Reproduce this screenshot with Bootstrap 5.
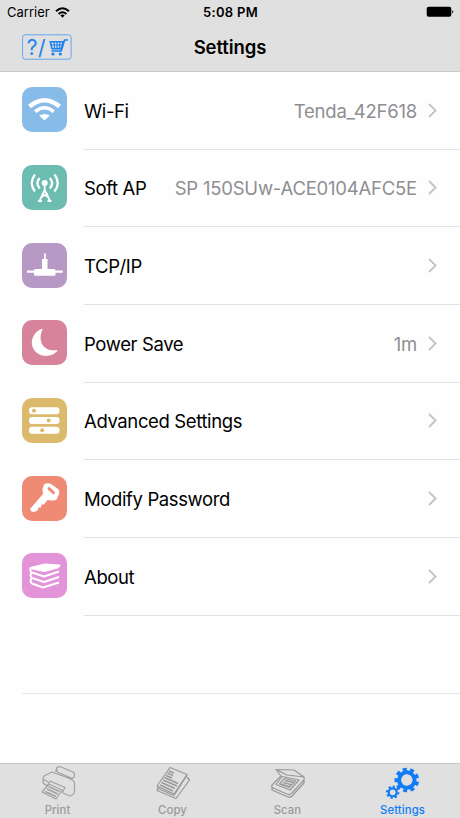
<!DOCTYPE html>
<html lang="en">
<head>
<meta charset="utf-8">
<meta name="viewport" content="width=device-width, initial-scale=1">
<title>Settings</title>
<link href="https://cdn.jsdelivr.net/npm/bootstrap@5.3.0/dist/css/bootstrap.min.css" rel="stylesheet">
<style>
body{font-family:Inter,"Liberation Sans",sans-serif;color:#000;background:#fefefe;height:818px;overflow:hidden}
svg{display:block;flex:none}
.top-area{background:#e0e0e0;height:72px;border-bottom:1px solid #c9c9c9}
.status{height:24px;font-size:13px;line-height:24px;padding:0 6px 0 7px}
.clock{letter-spacing:.3px}
.title-row{height:47px;padding:0 22px}
.help-btn{width:50px;height:26px;margin-top:-1px}
.page-title{font-size:18.5px;font-weight:600;line-height:24px;letter-spacing:-.08px;padding-bottom:2px}
.setting{height:77.7px;padding-left:22px}
.setting .tile{width:45px;height:45px;border-radius:10px;margin-top:-2px}
.setting .body-line{margin-left:17px;padding-right:23px;padding-top:2.4px;border-bottom:1px solid #e3e3e5;font-size:18.5px;letter-spacing:-.38px}
.value{color:#8e8e93;margin-right:11px;letter-spacing:-.22px}
.chev{margin-top:-3px}
.blank{height:77.7px;margin-left:22px;border-bottom:1px solid #e6e6e8}
.tabs{height:55px;background:#e0e0e0;border-top:1px solid #c6c6c6;color:#9a9a9a;font-size:11.3px;line-height:14px;letter-spacing:.1px;font-weight:500}
.tabs svg{margin-top:-1px}
.tabs .on{color:#107cf5}
</style>
<script src="https://cdn.jsdelivr.net/npm/bootstrap@5.3.0/dist/js/bootstrap.bundle.min.js"></script>
</head>
<body class="d-flex flex-column">
<header class="top-area flex-shrink-0">
  <div class="status row g-0">
    <div class="col d-flex align-items-center"><span>Carrier</span>
      <svg class="ms-1" width="17" height="13" viewBox="0 0 17 13" fill="none" stroke="#000" stroke-width="2"><path d="M2 5.200Q8.500 -.6 15 5.200M4.600 8Q8.500 4.600 12.400 8"/><path d="M6.300 9.300Q8.500 7.700 10.700 9.300L8.500 11.700z" fill="#000" stroke="none"/></svg>
    </div>
    <div class="col-auto fw-semibold clock">5:08 PM</div>
    <div class="col d-flex align-items-center justify-content-end"><svg width="28" height="12" viewBox="0 0 28 12"><rect x=".7" y=".8" width="24.600" height="10" rx="2"/><path d="M26.200 4.200Q28.500 5.800 26.200 7.500z"/></svg></div>
  </div>
  <nav class="title-row row g-0 align-items-center">
    <div class="col"><svg class="help-btn" viewBox="0 0 50 26" fill="none" stroke="#1b80f1"><rect x=".6" y=".8" width="48.500" height="24.400" rx="2.500" stroke="#62a5ef"/><text x="4.800" y="20.500" font-size="21" letter-spacing=".4" fill="#1b80f1" stroke="none">?/</text><path d="M46 6h-3.500l-3.300 11H29.500" stroke-width="1.700"/><path d="M28.300 7.700h13.100l-2.400 7H30z" stroke-width="1.600"/><path d="M28.500 11h12M32 8l.7 7M35 8v7M38 8l-.8 7" stroke-width="1.200"/><circle cx="31" cy="20" r="1.600" fill="#1b80f1" stroke="none"/><circle cx="38.300" cy="20" r="1.600" fill="#1b80f1" stroke="none"/></svg></div>
    <h1 class="page-title col-auto m-0">Settings</h1>
    <div class="col"></div>
  </nav>
</header>
<main class="flex-grow-1">
  <div class="setting d-flex align-items-center">
    <svg class="tile" style="background:#87bbe8" viewBox="0 0 45 45" fill="none" stroke="#fff"><path d="M7.500 19.500Q22.500 7 37.500 19.500" stroke-width="4.500"/><path d="M13.200 24.700Q22.500 16.800 31.800 24.700" stroke-width="3.600"/><path d="M17.200 28.500Q22.500 25.500 27.800 28.500L22.500 33.500z" fill="#fff" stroke="none"/></svg>
    <div class="body-line d-flex align-items-center flex-grow-1 h-100"><span class="me-auto">Wi-Fi</span><span class="value">Tenda_42F618</span><svg class="chev" width="9" height="15" viewBox="0 0 9 15" fill="none" stroke="#c3c3c8" stroke-width="1.800"><path d="M1 1l6.600 6.500L1 14"/></svg></div>
  </div>
  <div class="setting d-flex align-items-center">
    <svg class="tile" style="background:#6dbcb2" viewBox="0 0 45 45" fill="none" stroke="#fff" stroke-width="2.300"><path d="M13 9.500Q6.500 18 13 26.500M17.700 13Q13 18 17.700 23.500M32.500 9.500Q39 18 32.500 26.500M27.800 13Q32.500 18 27.800 23.500"/><circle cx="22.700" cy="18" r="3" fill="#fff" stroke="none"/><path d="M22.700 19v6L17.500 36M22.700 25L28 36M16 36h4M25.500 36h4M19.300 32L26 28.700M26.200 32L19.700 28.700" stroke-width="1.800"/></svg>
    <div class="body-line d-flex align-items-center flex-grow-1 h-100"><span class="me-auto">Soft AP</span><span class="value">SP 150SUw-ACE0104AFC5E</span><svg class="chev" width="9" height="15" viewBox="0 0 9 15" fill="none" stroke="#c3c3c8" stroke-width="1.800"><path d="M1 1l6.600 6.500L1 14"/></svg></div>
  </div>
  <div class="setting d-flex align-items-center">
    <svg class="tile" style="background:#b699c4" viewBox="0 0 45 45" fill="#fff"><path d="M22 10.500h1.800v5.500h1.700v10h6.700q1.300 0 1.300 1.500h7.200v2.200h-7.200v1.500q0 1.500-1.300 1.500H13.300q-1.300 0-1.300-1.500v-1.500H5v-2.200h7q0-1.500 1.300-1.500H20V16h2z"/></svg>
    <div class="body-line d-flex align-items-center flex-grow-1 h-100"><span class="me-auto">TCP/IP</span><svg class="chev" width="9" height="15" viewBox="0 0 9 15" fill="none" stroke="#c3c3c8" stroke-width="1.800"><path d="M1 1l6.600 6.500L1 14"/></svg></div>
  </div>
  <div class="setting d-flex align-items-center">
    <svg class="tile" style="background:#d7839b" viewBox="0 0 45 45" fill="#fff"><path d="M20.800 8.500C12 11 7.500 20.500 11 28C15.500 38 30.500 38.500 35.800 30C22.500 32.500 14.500 22 20.800 8.500z"/></svg>
    <div class="body-line d-flex align-items-center flex-grow-1 h-100"><span class="me-auto">Power Save</span><span class="value">1m</span><svg class="chev" width="9" height="15" viewBox="0 0 9 15" fill="none" stroke="#c3c3c8" stroke-width="1.800"><path d="M1 1l6.600 6.500L1 14"/></svg></div>
  </div>
  <div class="setting d-flex align-items-center">
    <svg class="tile" style="background:#dcba6d" viewBox="0 0 45 45" fill="#fff"><rect x="7" y="9.200" width="30.500" height="7" rx="3.300"/><rect x="7" y="19" width="30.500" height="7" rx="3.300"/><rect x="7" y="28.800" width="30.500" height="7" rx="3.300"/><g fill="#dcba6d"><circle cx="12" cy="12.700" r="2"/><circle cx="26.700" cy="22.500" r="2"/><circle cx="20.200" cy="32.300" r="2"/></g></svg>
    <div class="body-line d-flex align-items-center flex-grow-1 h-100"><span class="me-auto">Advanced Settings</span><svg class="chev" width="9" height="15" viewBox="0 0 9 15" fill="none" stroke="#c3c3c8" stroke-width="1.800"><path d="M1 1l6.600 6.500L1 14"/></svg></div>
  </div>
  <div class="setting d-flex align-items-center">
    <svg class="tile" style="background:#ef8a75" viewBox="0 0 45 45" fill="#fff"><path d="M22 8.500Q25 6.500 29 8L36 13Q38 15 37 18L35 23Q33 25 30 24.500L25.500 24L22 28.500L19.500 28.500L19 31.500L16.500 31.500L15.500 34.500L12 36Q8.500 36 8 33L21 18L20.500 13z"/><path d="M27 12.700L31.500 16.700" stroke="#ef8a75" stroke-width="3" stroke-linecap="round"/></svg>
    <div class="body-line d-flex align-items-center flex-grow-1 h-100"><span class="me-auto">Modify Password</span><svg class="chev" width="9" height="15" viewBox="0 0 9 15" fill="none" stroke="#c3c3c8" stroke-width="1.800"><path d="M1 1l6.600 6.500L1 14"/></svg></div>
  </div>
  <div class="setting d-flex align-items-center">
    <svg class="tile" style="background:#e394d8" viewBox="0 0 45 45" fill="none" stroke="#fff" stroke-width="2" stroke-linejoin="round"><path d="M8.500 15L23 11.500L37.500 12.500L35.500 14.500L22 18z" fill="#fff"/><path d="M9 15Q7 18 10 19.500L22 23.500L37 18.500M10 19.500Q7 22 10 25L22 29L37 24M10 25Q7 28 10 30.500L21 34.500L37 29.500"/></svg>
    <div class="body-line d-flex align-items-center flex-grow-1 h-100"><span class="me-auto">About</span><svg class="chev" width="9" height="15" viewBox="0 0 9 15" fill="none" stroke="#c3c3c8" stroke-width="1.800"><path d="M1 1l6.600 6.500L1 14"/></svg></div>
  </div>
  <div class="blank"></div>
</main>
<footer class="tabs row g-0 flex-shrink-0 text-center">
  <div class="col d-flex flex-column align-items-center"><svg width="36" height="40" viewBox="0 0 36 40" fill="none" stroke="#a0a0a0" stroke-width="1.200" stroke-linejoin="round"><path d="M3 15.500L4 13L12 9L20 12L27 14.500Q34 17 34.500 20V28Q34 32 30 33L23 30M3 15.500V20L7 23L10 18L25 24.500L22 30M3 16L8 19M15.500 8.500L17 4.500Q19 3 21 4L33 9Q35.500 11 34 14L32.500 15.500L18 9.500Q16 8 17 4.500"/><path d="M9 21L22 27L16 36L2 29z"/><path d="M8.500 23.500L19.500 28.500M7 26L18 31M5 28.500L16 33.500" stroke-width="1.500"/></svg><span>Print</span></div>
  <div class="col d-flex flex-column align-items-center"><svg width="36" height="40" viewBox="0 0 36 40" fill="none" stroke="#989898" stroke-width="1.200" stroke-linejoin="round"><path d="M15 4.500L32 11.500L19 31L2 23z"/><path d="M32 14L34.500 17L21 35.500L2 27.500L3.500 24M32 12L19 32.500L2 25"/><path d="M14 8L19 10M12.500 10L18 12.500M11 12.500L17 15M9.500 14.500L23 20.500M8 17L22 23M6.500 19.500L20 25.500M5 22L18 28" stroke-width="1.400"/><path d="M22 9L28.500 12L25 18L19 15z" fill="#e0e0e0" stroke="none"/></svg><span>Copy</span></div>
  <div class="col d-flex flex-column align-items-center"><svg width="36" height="40" viewBox="0 0 36 40" fill="none" stroke="#989898" stroke-width="1.200" stroke-linejoin="round"><path d="M6 6.500L24 7L34 14L17 12z"/><path d="M6 6.500L11 13L2 22Q1 24 3 25L17 31Q20 32.500 22 30L33 18Q35 16 34 14M2 23V27L18 34Q20.500 34.800 22.500 32.500L34 20V15"/><path d="M12 13.500L29 17L20 27L6 21.500z"/><path d="M14.500 15.500L25.500 18L19 24.500L9.500 21z"/><path d="M15 17.500L23.500 19.500M13 19.300L22 21.800M11.500 21L20 23.500" stroke-width="1.300"/></svg><span>Scan</span></div>
  <div class="col d-flex flex-column align-items-center on"><svg width="36" height="40" viewBox="0 0 36 40" fill="none" stroke="#107cf5"><g transform="rotate(8 21.800 17)"><circle cx="21.800" cy="17" r="7.700" stroke-width="4"/><circle cx="21.800" cy="17" r="10.500" stroke-width="3.600" pathLength="90" stroke-dasharray="5.500 4.500"/></g><circle cx="7.700" cy="29.300" r="4" stroke-width="2.200"/><circle cx="7.700" cy="29.300" r="5.700" stroke-width="2" pathLength="80" stroke-dasharray="5 5"/></svg><span>Settings</span></div>
</footer>
</body>
</html>
